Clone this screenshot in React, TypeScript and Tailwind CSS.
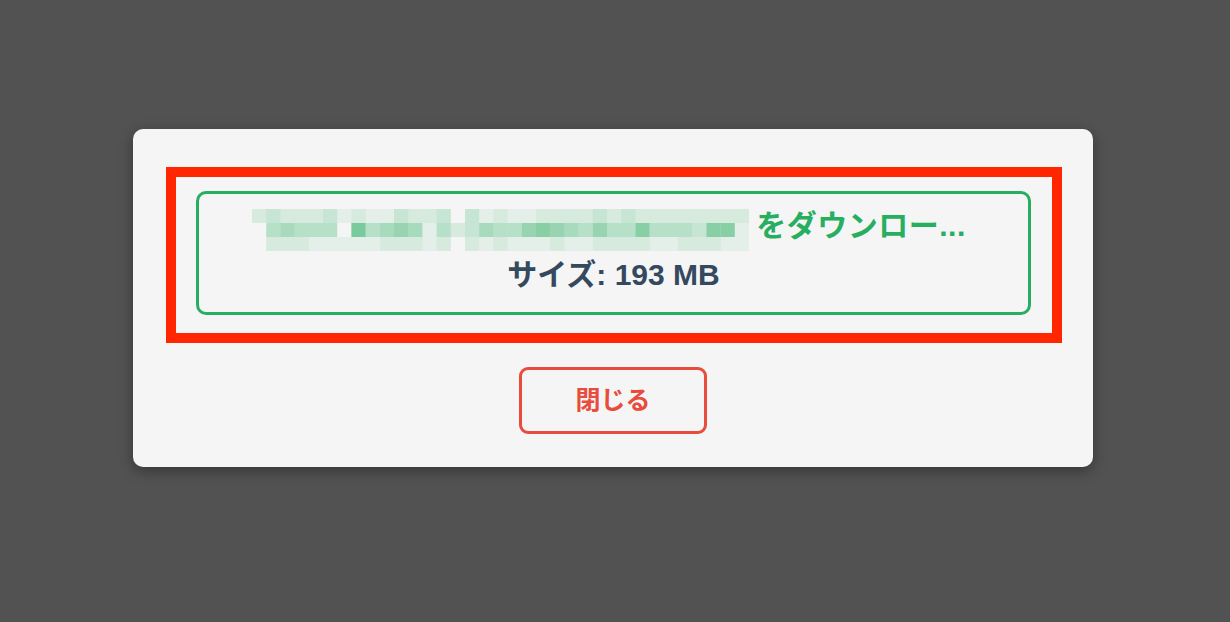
import React from 'react';

// mosaic intensity per 14px cell, three rows (the blurred file name)
const mosaicRows = [
  '23222312113223031211222232322222222',
  '04544408456514235446765464474443771',
  '02221111122212021211121122221122211',
];

function Mosaic() {
  const cell = 14;
  const cols = mosaicRows[0].length;
  return (
    <svg
      width={497}
      height={cell * 3}
      viewBox={`0 0 ${cols * cell} ${cell * 3}`}
      preserveAspectRatio="none"
      className="mt-[8px] shrink-0"
    >
      {mosaicRows.map((row, r) =>
        row.split('').map((c, i) => {
          const level = Number(c);
          if (level === 0) return null;
          return (
            <rect
              key={`${r}-${i}`}
              x={i * cell}
              y={r * cell}
              width={cell}
              height={cell}
              fill="#27ae60"
              fillOpacity={level * 0.075}
            />
          );
        })
      )}
    </svg>
  );
}

export default function App() {
  return (
    <div
      className="flex h-[622px] w-full justify-center bg-[#525252] pr-[4px] pt-[129px]"
      style={{ fontFamily: '"Liberation Sans", "Noto Sans CJK JP", sans-serif' }}
    >
      <div className="flex h-[338px] w-[960px] flex-col items-center rounded-[10px] bg-[#f5f5f5] pt-[38px] shadow-[0_4px_14px_rgba(0,0,0,0.35)]">
        <div className="ml-[33px] w-[896px] self-start border-[10px] border-[#ff2600] px-[20px] pb-[18px] pt-[14px]">
          <div className="flex h-[124px] w-[835px] flex-col items-center justify-center gap-[19px] rounded-[10px] border-[3px] border-[#27ae60] pb-[5px]">
            <div className="flex h-[30px] items-center gap-[7px] pr-[9px]">
              <Mosaic />
              <span className="text-[30px] font-bold leading-none tracking-[0.5px] text-[#27ae60]">
                をダウンロー...
              </span>
            </div>
            <div className="text-[30px] font-bold leading-none text-[#34495e]">
              サイズ: 193 MB
            </div>
          </div>
        </div>
        <button className="mt-[24px] flex h-[67px] w-[188px] items-center justify-center rounded-[9px] border-[3px] border-[#e74c3c] text-[25px] font-bold text-[#e74c3c]">
          閉じる
        </button>
      </div>
    </div>
  );
}
